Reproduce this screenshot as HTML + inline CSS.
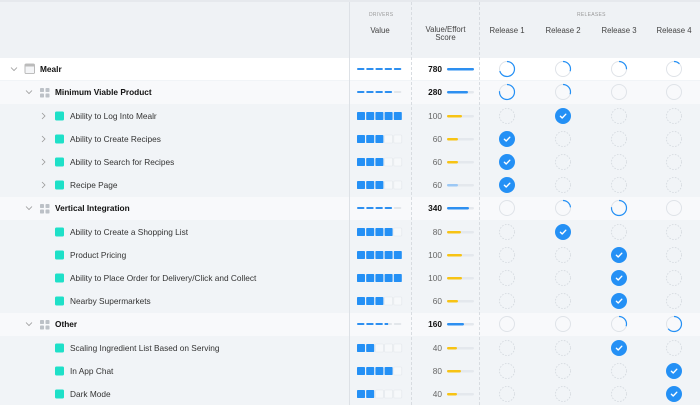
<!DOCTYPE html>
<html><head><meta charset="utf-8"><style>
body{margin:0;width:700px;height:405px;overflow:hidden;background:#f1f4f7;font-family:"Liberation Sans",sans-serif;position:relative}
.r{position:absolute;left:0;width:700px}
.t{position:absolute;font-size:8.3px;color:#333;white-space:nowrap}
.b{font-weight:bold;color:#111}
.h{position:absolute;font-size:7.8px;color:#444;text-align:center}
.s{position:absolute;font-size:5px;color:#999;letter-spacing:.3px}
.n{position:absolute;font-size:8.3px;color:#666;text-align:right;width:30px;left:412px}
.nb{font-weight:bold;color:#111}
</style></head><body>
<div class="r" style="top:0;height:58px;background:#eff2f5;border-top:2px solid #e6e9ed"></div>
<div class="r" style="top:58px;height:22px;background:#fff"></div>
<div class="r" style="top:81px;height:23px;background:#f8f9fb"></div>
<div class="r" style="top:197px;height:23px;background:#f8f9fb"></div>
<div class="r" style="top:313px;height:23px;background:#f8f9fb"></div>
<div style="position:absolute;left:349px;top:2px;width:1px;height:403px;background:#dde1e6"></div>
<div style="position:absolute;left:411px;top:2px;height:403px;border-left:1px dashed #d8dce1"></div>
<div style="position:absolute;left:479px;top:2px;height:403px;border-left:1px dashed #d8dce1"></div>
<div class="s" style="left:369px;top:12px">DRIVERS</div>
<div class="s" style="left:577px;top:12px">RELEASES</div>
<div class="h" style="left:350px;width:60px;top:26px">Value</div>
<div class="h" style="left:412px;width:67px;top:26px;line-height:8px">Value/Effort<br>Score</div>
<div class="h" style="left:480px;width:54px;top:26px">Release 1</div>
<div class="h" style="left:536px;width:54px;top:26px">Release 2</div>
<div class="h" style="left:592px;width:54px;top:26px">Release 3</div>
<div class="h" style="left:647px;width:54px;top:26px">Release 4</div>

<div class="t b" style="left:40px;top:64px">Mealr</div>
<div class="t b" style="left:55px;top:87px">Minimum Viable Product</div>
<div class="t" style="left:70px;top:111px">Ability to Log Into Mealr</div>
<div class="t" style="left:70px;top:134px">Ability to Create Recipes</div>
<div class="t" style="left:70px;top:157px">Ability to Search for Recipes</div>
<div class="t" style="left:70px;top:180px">Recipe Page</div>
<div class="t b" style="left:55px;top:203px">Vertical Integration</div>
<div class="t" style="left:70px;top:227px">Ability to Create a Shopping List</div>
<div class="t" style="left:70px;top:250px">Product Pricing</div>
<div class="t" style="left:70px;top:273px">Ability to Place Order for Delivery/Click and Collect</div>
<div class="t" style="left:70px;top:296px">Nearby Supermarkets</div>
<div class="t b" style="left:55px;top:319px">Other</div>
<div class="t" style="left:70px;top:343px">Scaling Ingredient List Based on Serving</div>
<div class="t" style="left:70px;top:366px">In App Chat</div>
<div class="t" style="left:70px;top:389px">Dark Mode</div>

<div class="n nb" style="top:64px">780</div>
<div class="n nb" style="top:87px">280</div>
<div class="n" style="top:111px">100</div>
<div class="n" style="top:134px">60</div>
<div class="n" style="top:157px">60</div>
<div class="n" style="top:180px">60</div>
<div class="n nb" style="top:203px">340</div>
<div class="n" style="top:227px">80</div>
<div class="n" style="top:250px">100</div>
<div class="n" style="top:273px">100</div>
<div class="n" style="top:296px">60</div>
<div class="n nb" style="top:319px">160</div>
<div class="n" style="top:343px">40</div>
<div class="n" style="top:366px">80</div>
<div class="n" style="top:389px">40</div>

<svg width="700" height="405" style="position:absolute;left:0;top:0" xmlns="http://www.w3.org/2000/svg">
<defs>
<g id="chk"><circle r="8" fill="#2490f5"/><path d="M-2.6 0.2 L-0.8 2 L2.8 -1.8" stroke="#fff" stroke-width="1.4" fill="none" stroke-linecap="round" stroke-linejoin="round"/></g>
<circle id="emp" r="7.5" fill="none" stroke="#d3d8de" stroke-width="0.8" stroke-dasharray="1.6 1.4"/>
<circle id="gc" r="7.5" fill="none" stroke="#dfe3e8" stroke-width="1"/>
<rect id="sq" width="8" height="8" rx="0.8" fill="#2490f5"/>
<rect id="se" width="8" height="8" rx="0.8" fill="#f6f8fa" stroke="#e2e6ea" stroke-width="0.6"/>
<rect id="da" width="7.5" height="2" rx="1" fill="#2d8ff0"/>
<rect id="de" width="7.5" height="2" rx="1" fill="#e2e6ea"/>
</defs>
<g stroke="#999" stroke-width="0.8" fill="none">
<path d="M11 67.5 L14 70.5 L17 67.5"/>
<path d="M26 90.5 L29 93.5 L32 90.5"/>
<path d="M26 206.5 L29 209.5 L32 206.5"/>
<path d="M26 322.5 L29 325.5 L32 322.5"/>
<path d="M42 113 L45 116 L42 119"/>
<path d="M42 136 L45 139 L42 142"/>
<path d="M42 159 L45 162 L42 165"/>
<path d="M42 182 L45 185 L42 188"/>
</g>
<rect x="25" y="64" width="9.5" height="9.5" rx="1" fill="#f4f5f7" stroke="#aaa" stroke-width="0.8"/>
<rect x="25" y="64" width="9.5" height="2.5" fill="#bbb"/>
<g fill="#bcc1c7">
<rect x="40" y="88" width="4" height="4" rx=".8"/><rect x="45.5" y="88" width="4" height="4" rx=".8"/><rect x="40" y="93.5" width="4" height="4" rx=".8"/><rect x="45.5" y="93.5" width="4" height="4" rx=".8"/>
<rect x="40" y="204" width="4" height="4" rx=".8"/><rect x="45.5" y="204" width="4" height="4" rx=".8"/><rect x="40" y="209.5" width="4" height="4" rx=".8"/><rect x="45.5" y="209.5" width="4" height="4" rx=".8"/>
<rect x="40" y="320" width="4" height="4" rx=".8"/><rect x="45.5" y="320" width="4" height="4" rx=".8"/><rect x="40" y="325.5" width="4" height="4" rx=".8"/><rect x="45.5" y="325.5" width="4" height="4" rx=".8"/>
</g>
<g fill="#1ee0c8">
<rect x="55" y="111.5" width="9" height="9" rx="1.5"/><rect x="55" y="134.5" width="9" height="9" rx="1.5"/><rect x="55" y="157.5" width="9" height="9" rx="1.5"/><rect x="55" y="180.5" width="9" height="9" rx="1.5"/>
<rect x="55" y="227.5" width="9" height="9" rx="1.5"/><rect x="55" y="250.5" width="9" height="9" rx="1.5"/><rect x="55" y="273.5" width="9" height="9" rx="1.5"/><rect x="55" y="296.5" width="9" height="9" rx="1.5"/>
<rect x="55" y="343.5" width="9" height="9" rx="1.5"/><rect x="55" y="366.5" width="9" height="9" rx="1.5"/><rect x="55" y="389.5" width="9" height="9" rx="1.5"/>
</g>
<g transform="translate(357,68)"><use href="#da"/><use href="#da" x="9.2"/><use href="#da" x="18.4"/><use href="#da" x="27.6"/><use href="#da" x="36.8"/></g>
<g transform="translate(357,91)"><use href="#da"/><use href="#da" x="9.2"/><use href="#da" x="18.4"/><use href="#da" x="27.6"/><use href="#de" x="36.8"/></g>
<g transform="translate(357,207)"><use href="#da"/><use href="#da" x="9.2"/><use href="#da" x="18.4"/><use href="#da" x="27.6"/><use href="#de" x="36.8"/></g>
<g transform="translate(357,323)"><use href="#da"/><use href="#da" x="9.2"/><use href="#da" x="18.4"/><use href="#de" x="27.6"/><use href="#de" x="36.8"/><rect x="27.6" width="3.5" height="2" fill="#2d8ff0"/></g>
<g transform="translate(357,112)"><use href="#sq"/><use href="#sq" x="9.2"/><use href="#sq" x="18.4"/><use href="#sq" x="27.6"/><use href="#sq" x="36.8"/></g>
<g transform="translate(357,135)"><use href="#sq"/><use href="#sq" x="9.2"/><use href="#sq" x="18.4"/><use href="#se" x="27.6"/><use href="#se" x="36.8"/></g>
<g transform="translate(357,158)"><use href="#sq"/><use href="#sq" x="9.2"/><use href="#sq" x="18.4"/><use href="#se" x="27.6"/><use href="#se" x="36.8"/></g>
<g transform="translate(357,181)"><use href="#sq"/><use href="#sq" x="9.2"/><use href="#sq" x="18.4"/><use href="#se" x="27.6"/><use href="#se" x="36.8"/></g>
<g transform="translate(357,228)"><use href="#sq"/><use href="#sq" x="9.2"/><use href="#sq" x="18.4"/><use href="#sq" x="27.6"/><use href="#se" x="36.8"/></g>
<g transform="translate(357,251)"><use href="#sq"/><use href="#sq" x="9.2"/><use href="#sq" x="18.4"/><use href="#sq" x="27.6"/><use href="#sq" x="36.8"/></g>
<g transform="translate(357,274)"><use href="#sq"/><use href="#sq" x="9.2"/><use href="#sq" x="18.4"/><use href="#sq" x="27.6"/><use href="#sq" x="36.8"/></g>
<g transform="translate(357,297)"><use href="#sq"/><use href="#sq" x="9.2"/><use href="#sq" x="18.4"/><use href="#se" x="27.6"/><use href="#se" x="36.8"/></g>
<g transform="translate(357,344)"><use href="#sq"/><use href="#sq" x="9.2"/><use href="#se" x="18.4"/><use href="#se" x="27.6"/><use href="#se" x="36.8"/></g>
<g transform="translate(357,367)"><use href="#sq"/><use href="#sq" x="9.2"/><use href="#sq" x="18.4"/><use href="#sq" x="27.6"/><use href="#se" x="36.8"/></g>
<g transform="translate(357,390)"><use href="#sq"/><use href="#sq" x="9.2"/><use href="#se" x="18.4"/><use href="#se" x="27.6"/><use href="#se" x="36.8"/></g>
<g fill="#e4e8ed">
<rect x="447" y="68" width="27" height="2.5" rx="1.2"/><rect x="447" y="91" width="27" height="2.5" rx="1.2"/><rect x="447" y="115" width="27" height="2.5" rx="1.2"/><rect x="447" y="138" width="27" height="2.5" rx="1.2"/><rect x="447" y="161" width="27" height="2.5" rx="1.2"/><rect x="447" y="184" width="27" height="2.5" rx="1.2"/><rect x="447" y="207" width="27" height="2.5" rx="1.2"/><rect x="447" y="231" width="27" height="2.5" rx="1.2"/><rect x="447" y="254" width="27" height="2.5" rx="1.2"/><rect x="447" y="277" width="27" height="2.5" rx="1.2"/><rect x="447" y="300" width="27" height="2.5" rx="1.2"/><rect x="447" y="323" width="27" height="2.5" rx="1.2"/><rect x="447" y="347" width="27" height="2.5" rx="1.2"/><rect x="447" y="370" width="27" height="2.5" rx="1.2"/><rect x="447" y="393" width="27" height="2.5" rx="1.2"/>
</g>
<g fill="#2d8ff0"><rect x="447" y="68" width="27" height="2.5" rx="1.2"/><rect x="447" y="91" width="21" height="2.5" rx="1.2"/><rect x="447" y="207" width="22" height="2.5" rx="1.2"/><rect x="447" y="323" width="17" height="2.5" rx="1.2"/></g>
<rect x="447" y="184" width="11" height="2.5" rx="1.2" fill="#9cc8f5"/>
<g fill="#f7c314"><rect x="447" y="115" width="15" height="2.5" rx="1.2"/><rect x="447" y="138" width="11" height="2.5" rx="1.2"/><rect x="447" y="161" width="11" height="2.5" rx="1.2"/><rect x="447" y="231" width="14" height="2.5" rx="1.2"/><rect x="447" y="254" width="15" height="2.5" rx="1.2"/><rect x="447" y="277" width="15" height="2.5" rx="1.2"/><rect x="447" y="300" width="11" height="2.5" rx="1.2"/><rect x="447" y="347" width="10" height="2.5" rx="1.2"/><rect x="447" y="370" width="14" height="2.5" rx="1.2"/><rect x="447" y="393" width="10" height="2.5" rx="1.2"/></g>
<g>
<use href="#gc" x="507" y="69"/><use href="#gc" x="563" y="69"/><use href="#gc" x="619" y="69"/><use href="#gc" x="674" y="69"/>
<use href="#gc" x="507" y="92"/><use href="#gc" x="563" y="92"/><use href="#gc" x="619" y="92"/><use href="#gc" x="674" y="92"/>
<use href="#gc" x="507" y="208"/><use href="#gc" x="563" y="208"/><use href="#gc" x="619" y="208"/><use href="#gc" x="674" y="208"/>
<use href="#gc" x="507" y="324"/><use href="#gc" x="563" y="324"/><use href="#gc" x="619" y="324"/><use href="#gc" x="674" y="324"/>
</g>
<g fill="none" stroke="#2490f5" stroke-width="1.2">
<circle cx="507" cy="69" r="7.5" stroke-dasharray="33 47.1" transform="rotate(-90 507 69)"/>
<circle cx="563" cy="69" r="7.5" stroke-dasharray="14 47.1" transform="rotate(-90 563 69)"/>
<circle cx="619" cy="69" r="7.5" stroke-dasharray="12 47.1" transform="rotate(-90 619 69)"/>
<circle cx="674" cy="69" r="7.5" stroke-dasharray="6 47.1" transform="rotate(-90 674 69)"/>
<circle cx="507" cy="92" r="7.5" stroke-dasharray="36 47.1" transform="rotate(-90 507 92)"/>
<circle cx="563" cy="92" r="7.5" stroke-dasharray="14 47.1" transform="rotate(-90 563 92)"/>
<circle cx="563" cy="208" r="7.5" stroke-dasharray="11 47.1" transform="rotate(-90 563 208)"/>
<circle cx="619" cy="208" r="7.5" stroke-dasharray="36 47.1" transform="rotate(-90 619 208)"/>
<circle cx="619" cy="324" r="7.5" stroke-dasharray="14 47.1" transform="rotate(-90 619 324)"/>
<circle cx="674" cy="324" r="7.5" stroke-dasharray="30 47.1" transform="rotate(-90 674 324)"/>
</g>
<use href="#emp" x="507" y="116"/><use href="#chk" x="563" y="116"/><use href="#emp" x="619" y="116"/><use href="#emp" x="674" y="116"/>
<use href="#chk" x="507" y="139"/><use href="#emp" x="563" y="139"/><use href="#emp" x="619" y="139"/><use href="#emp" x="674" y="139"/>
<use href="#chk" x="507" y="162"/><use href="#emp" x="563" y="162"/><use href="#emp" x="619" y="162"/><use href="#emp" x="674" y="162"/>
<use href="#chk" x="507" y="185"/><use href="#emp" x="563" y="185"/><use href="#emp" x="619" y="185"/><use href="#emp" x="674" y="185"/>
<use href="#emp" x="507" y="232"/><use href="#chk" x="563" y="232"/><use href="#emp" x="619" y="232"/><use href="#emp" x="674" y="232"/>
<use href="#emp" x="507" y="255"/><use href="#emp" x="563" y="255"/><use href="#chk" x="619" y="255"/><use href="#emp" x="674" y="255"/>
<use href="#emp" x="507" y="278"/><use href="#emp" x="563" y="278"/><use href="#chk" x="619" y="278"/><use href="#emp" x="674" y="278"/>
<use href="#emp" x="507" y="301"/><use href="#emp" x="563" y="301"/><use href="#chk" x="619" y="301"/><use href="#emp" x="674" y="301"/>
<use href="#emp" x="507" y="348"/><use href="#emp" x="563" y="348"/><use href="#chk" x="619" y="348"/><use href="#emp" x="674" y="348"/>
<use href="#emp" x="507" y="371"/><use href="#emp" x="563" y="371"/><use href="#emp" x="619" y="371"/><use href="#chk" x="674" y="371"/>
<use href="#emp" x="507" y="394"/><use href="#emp" x="563" y="394"/><use href="#emp" x="619" y="394"/><use href="#chk" x="674" y="394"/>
</svg>
</body></html>
